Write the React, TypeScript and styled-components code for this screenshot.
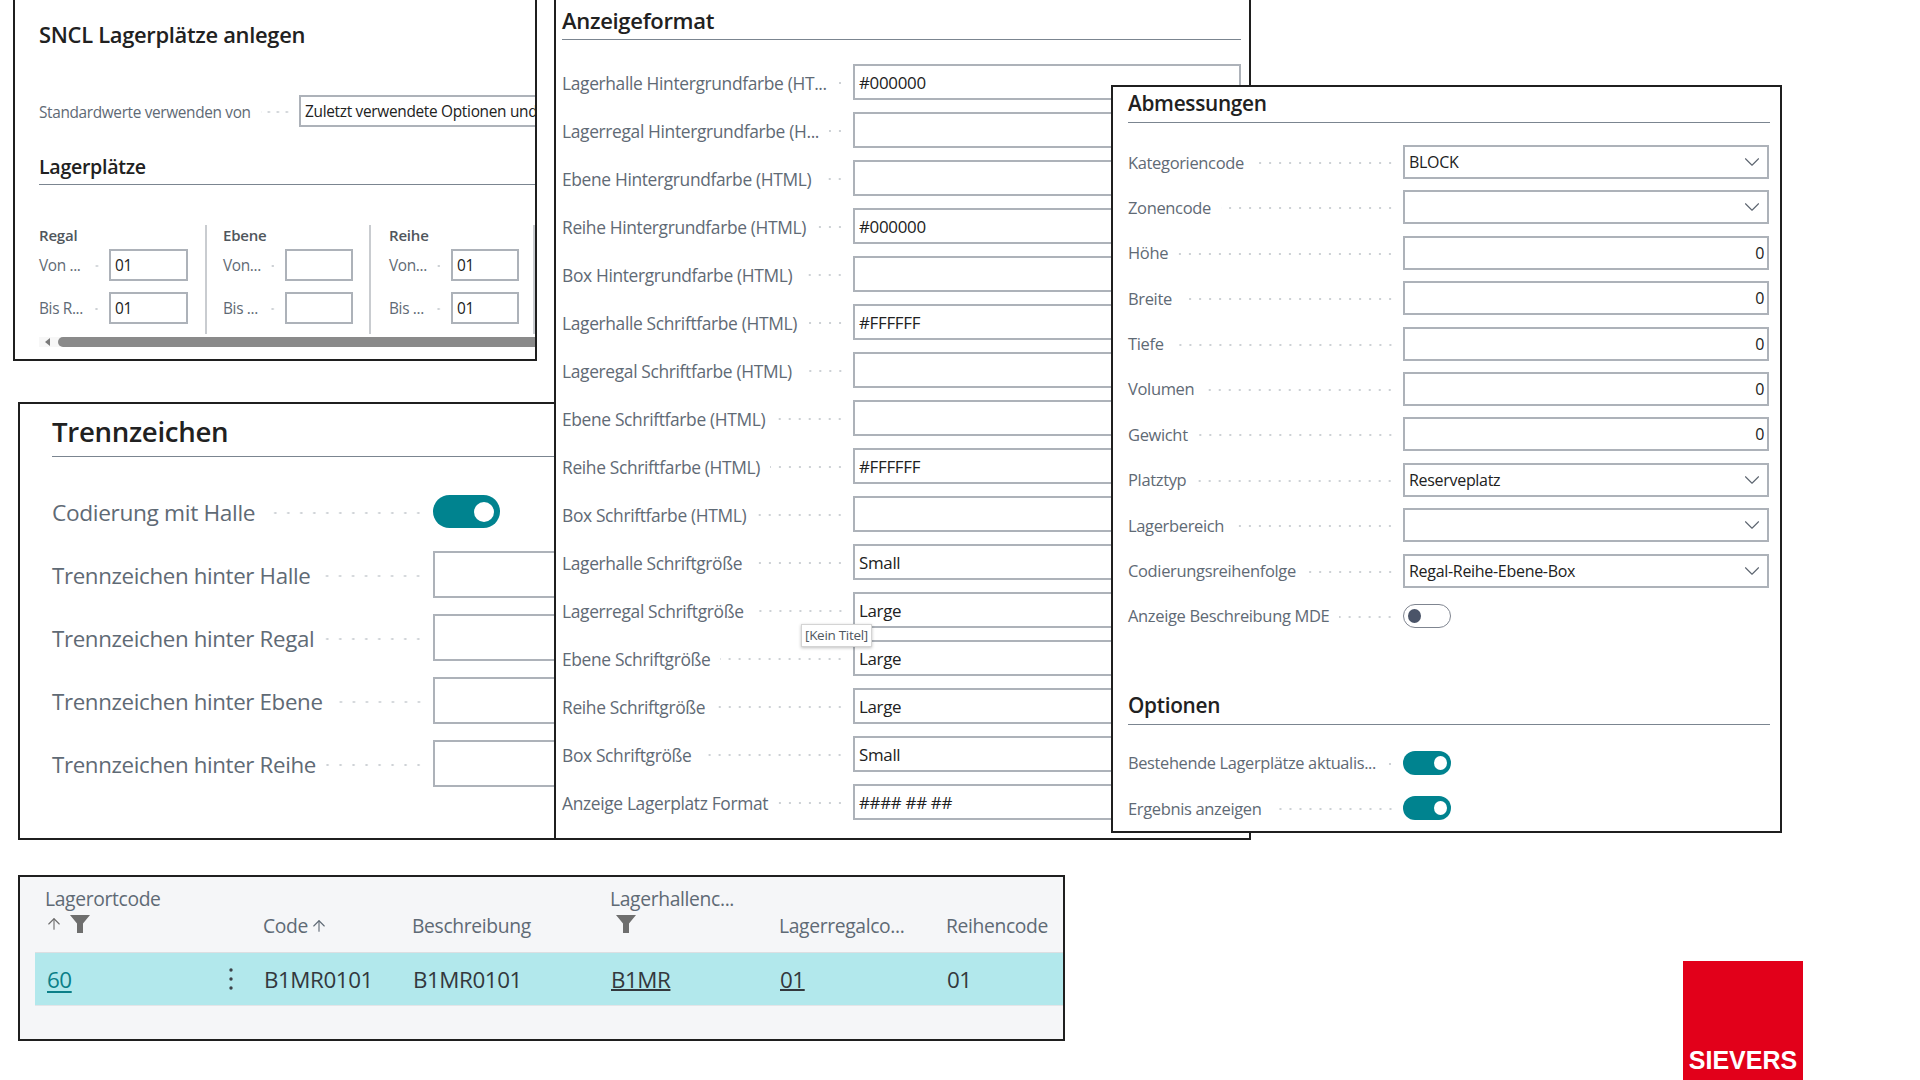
import React from 'react'
import styled, { createGlobalStyle } from 'styled-components'
import { ArrowUp, ChevronDown } from 'lucide-react'

const GlobalStyle = createGlobalStyle`
  html, body {
    margin: 0;
    padding: 0;
    background: #fff;
  }

  body {
    font-family: 'Open Sans', 'Noto Sans', sans-serif;
    color: #212121;
  }
`

const Canvas = styled.div`
  position: relative;
  width: 1920px;
  height: 1080px;
  overflow: hidden;
  background: #fff;
`

const Window = styled.section`
  position: absolute;
  box-sizing: border-box;
  overflow: hidden;
  display: flex;
  flex-direction: column;
  background: #fff;
  border: 2px solid #1f1f1f;
`

const SetupWindow = styled(Window)`
  left: 13px;
  top: -2px;
  width: 524px;
  height: 363px;
  padding-left: 24px;
`

const SeparatorWindow = styled(Window)`
  left: 18px;
  top: 402px;
  width: 545px;
  height: 438px;
  padding-left: 32px;
`

const FormatWindow = styled(Window)`
  left: 554px;
  top: -2px;
  width: 697px;
  height: 842px;
  padding: 0 8px 0 6px;
  overflow: visible;
`

const DimensionWindow = styled(Window)`
  left: 1111px;
  top: 85px;
  width: 671px;
  height: 748px;
  padding: 0 10px 0 15px;
`

const TableWindow = styled(Window)`
  left: 18px;
  top: 875px;
  width: 1047px;
  height: 166px;
  padding-left: 15px;
  background: #f5f6f8;
`

const PageTitle = styled.h1`
  margin: 0;
  height: 70px;
  font-size: 21.9px;
  font-weight: 600;
  line-height: 70px;
  letter-spacing: -0.3px;
  white-space: nowrap;
`

const Heading = styled.h2<{ $size: number; $height: number; $rise: number; $top?: number }>`
  flex: none;
  box-sizing: border-box;
  margin: ${(p) => p.$top ?? 0}px 0 0;
  height: ${(p) => p.$height}px;
  font-size: ${(p) => p.$size}px;
  font-weight: 600;
  line-height: ${(p) => 2 * (p.$height - p.$rise)}px;
  letter-spacing: -0.3px;
  white-space: nowrap;
  border-bottom: 1.5px solid #7b8590;
`

const Label = styled.span<{ $size: number }>`
  flex: none;
  font-size: ${(p) => p.$size}px;
  letter-spacing: -0.35px;
  color: #5f6a75;
  white-space: nowrap;
`

const Leader = styled.span<{ $step: number }>`
  flex: 1;
  min-width: 0;
  height: 4px;
  margin: 2px 8px 0 10px;
  background-image: radial-gradient(circle, #cdd1d5 1px, transparent 1.3px);
  background-size: ${(p) => p.$step}px 4px;
  background-position: right center;
`

const LabelCell = styled.div`
  display: flex;
  align-items: center;
  min-width: 0;
`

const ValueBox = styled.div<{ $size: number; $right?: boolean }>`
  position: relative;
  box-sizing: border-box;
  display: flex;
  align-items: center;
  justify-content: ${(p) => (p.$right ? 'flex-end' : 'flex-start')};
  height: 100%;
  padding: ${(p) => (p.$right ? '0 3px 0 0' : '0 0 0 4px')};
  overflow: hidden;
  background: #fff;
  border: 2px solid #adb2b9;
  font-size: ${(p) => p.$size}px;
  letter-spacing: -0.3px;
  color: #212121;
  white-space: nowrap;
`

const Chevron = styled(ChevronDown)`
  position: absolute;
  right: 2px;
  top: 50%;
  margin-top: -13px;
  color: #5d6570;
`

const Track = styled.span<{ $on: boolean; $large?: boolean }>`
  box-sizing: border-box;
  display: flex;
  align-items: center;
  justify-content: ${(p) => (p.$on ? 'flex-end' : 'flex-start')};
  width: ${(p) => (p.$large ? 67 : 48)}px;
  height: ${(p) => (p.$large ? 33 : 24)}px;
  padding: 0 ${(p) => (p.$large ? 6 : 4)}px;
  border-radius: 17px;
  background: ${(p) => (p.$on ? '#00838f' : '#fff')};
  border: ${(p) => (p.$on ? 'none' : '1.5px solid #7f8590')};
`

const Knob = styled.span<{ $on: boolean; $large?: boolean }>`
  width: ${(p) => (p.$large ? 20 : 13)}px;
  height: ${(p) => (p.$large ? 20 : 14)}px;
  border-radius: 50%;
  background: ${(p) => (p.$on ? '#fff' : '#4a5468')};
`

const DefaultsRow = styled.div`
  flex: none;
  display: grid;
  grid-template-columns: 260px 400px;
  height: 32px;
  margin-top: 25px;

  ${Label} {
    padding-top: 2px;
  }
`

const SetupRule = styled(Heading)`
  width: 640px;
`

const GroupRow = styled.div`
  flex: none;
  display: flex;
  margin-top: 40px;
`

const Group = styled.div<{ $width: number; $pad: number }>`
  flex: none;
  box-sizing: border-box;
  width: ${(p) => p.$width}px;
  height: 109px;
  padding-left: ${(p) => p.$pad}px;
  border-right: 2px solid #c9ccd0;
`

const GroupTitle = styled.div`
  height: 20px;
  margin-bottom: 4px;
  font-size: 15px;
  font-weight: 600;
  line-height: 20px;
  letter-spacing: -0.2px;
  color: #50565c;
`

const RangeRow = styled.div<{ $label: number; $input: number }>`
  display: grid;
  grid-template-columns: ${(p) => p.$label}px ${(p) => p.$input}px;
  height: 32px;
  margin-bottom: 11px;
`

const ScrollTrack = styled.div`
  flex: none;
  display: flex;
  align-items: center;
  gap: 8px;
  height: 10px;
  margin-top: 3px;
  background: #f7f7f7;
`

const ScrollArrow = styled.span`
  flex: none;
  margin-left: 6px;
  border-style: solid;
  border-width: 4px 5px 4px 0;
  border-color: transparent #7a7a7a transparent transparent;
`

const ScrollThumb = styled.span`
  flex: 1;
  height: 10px;
  border-radius: 5px 0 0 5px;
  background: #8a8a8a;
`

const SeparatorRows = styled.div`
  display: flex;
  flex-direction: column;
  gap: 16px;
  margin-top: 31px;
`

const SeparatorRow = styled.div`
  display: grid;
  grid-template-columns: 381px 220px;
  align-items: center;
  height: 47px;

  ${Label} {
    padding-top: 2px;
  }
`

const FormatRows = styled.div`
  display: flex;
  flex-direction: column;
  gap: 12px;
  margin-top: 24px;
`

const FormatRow = styled.div`
  display: grid;
  grid-template-columns: 291px 388px;
  height: 36px;

  ${Label} {
    padding-top: 2px;
  }
`

const KeinTitel = styled.div`
  position: absolute;
  left: 245px;
  top: 624px;
  z-index: 2;
  box-sizing: border-box;
  width: 71px;
  height: 23px;
  background: #fff;
  border: 1px solid #d4d4d4;
  box-shadow: 0 1px 3px rgba(0, 0, 0, 0.25);
  font-size: 13.5px;
  line-height: 21px;
  letter-spacing: -0.3px;
  text-align: center;
  color: #4f5760;
  white-space: nowrap;
`

const DimensionRows = styled.div<{ $top: number }>`
  display: flex;
  flex-direction: column;
  gap: 11.4px;
  margin-top: ${(p) => p.$top}px;
`

const DimensionRow = styled.div`
  display: grid;
  grid-template-columns: 275px 366px;
  align-items: center;
  height: 34px;
`

const TableGrid = styled.div`
  display: grid;
  grid-template-columns: 228px 149px 198px 169px 167px 1fr;
`

const HeaderCell = styled.div<{ $first?: boolean }>`
  display: flex;
  flex-direction: column;
  justify-content: flex-end;
  box-sizing: border-box;
  height: 75px;
  padding: 0 0 14px ${(p) => (p.$first ? 10 : 0)}px;
  font-size: 19.3px;
  line-height: 24px;
  letter-spacing: -0.35px;
  color: #5f6a75;
  white-space: nowrap;
`

const HeaderIcons = styled.div<{ $indent?: number }>`
  display: flex;
  align-items: center;
  gap: 7px;
  height: 24px;
  margin: 1px 0 2px ${(p) => p.$indent ?? 0}px;
  color: #6e6e6e;
`

const HeaderInline = styled.div`
  display: flex;
  align-items: center;
  gap: 2px;
`

const BodyRow = styled(TableGrid)`
  box-sizing: border-box;
  height: 54px;
  background: #b2e8ec;
  border-top: 1px solid #dcdfe2;
  border-bottom: 1px solid #e3e5e8;
`

const BodyCell = styled.div<{ $first?: boolean }>`
  display: flex;
  align-items: center;
  justify-content: ${(p) => (p.$first ? 'space-between' : 'flex-start')};
  padding: ${(p) => (p.$first ? '0 30px 0 12px' : '0 0 0 1px')};
  font-size: 22.4px;
  letter-spacing: -0.45px;
  color: #33383d;
`

const RowLink = styled.a`
  color: #0b7f88;
  text-decoration: underline;
  text-underline-offset: 3px;
`

const CodeLink = styled.span`
  text-decoration: underline;
  text-decoration-thickness: 2px;
  text-underline-offset: 1px;
`

const LogoMark = styled.div`
  position: absolute;
  left: 1683px;
  top: 961px;
  display: flex;
  align-items: flex-end;
  justify-content: center;
  box-sizing: border-box;
  width: 120px;
  height: 119px;
  padding-bottom: 6px;
  background: #e2001a;
  font-family: 'Liberation Sans', Arial, sans-serif;
  font-size: 25px;
  font-weight: 700;
  line-height: 28px;
  color: #fff;
`

const Funnel = () => (
  <svg width="20" height="18" viewBox="0 0 20 18" fill="currentColor">
    <path d="M0 0h20l-7 8.5V18H7V8.500z" />
  </svg>
)

const VerticalDots = () => (
  <svg width="4" height="24" viewBox="0 0 4 24" fill="#3c4248">
    <circle cx="2" cy="3" r="1.7" />
    <circle cx="2" cy="12" r="1.7" />
    <circle cx="2" cy="21" r="1.7" />
  </svg>
)

const Toggle = ({ on, large }: { on: boolean; large?: boolean }) => (
  <Track $on={on} $large={large}>
    <Knob $on={on} $large={large} />
  </Track>
)

const Caption = ({ text, size, step }: { text: string; size: number; step: number }) => (
  <LabelCell>
    <Label $size={size}>{text}</Label>
    <Leader $step={step} />
  </LabelCell>
)

const ranges = [
  {
    title: 'Regal',
    width: 168,
    pad: 0,
    label: 70,
    input: 79,
    from: 'Von ...',
    to: 'Bis R...',
    fromValue: '01',
    toValue: '01',
  },
  {
    title: 'Ebene',
    width: 164,
    pad: 16,
    label: 62,
    input: 68,
    from: 'Von...',
    to: 'Bis ...',
    fromValue: '',
    toValue: '',
  },
  {
    title: 'Reihe',
    width: 164,
    pad: 18,
    label: 62,
    input: 68,
    from: 'Von...',
    to: 'Bis ...',
    fromValue: '01',
    toValue: '01',
  },
]

const separators = [
  'Trennzeichen hinter Halle',
  'Trennzeichen hinter Regal',
  'Trennzeichen hinter Ebene',
  'Trennzeichen hinter Reihe',
]

const formats = [
  ['Lagerhalle Hintergrundfarbe (HT...', '#000000'],
  ['Lagerregal Hintergrundfarbe (H...', ''],
  ['Ebene Hintergrundfarbe (HTML)', ''],
  ['Reihe Hintergrundfarbe (HTML)', '#000000'],
  ['Box Hintergrundfarbe (HTML)', ''],
  ['Lagerhalle Schriftfarbe (HTML)', '#FFFFFF'],
  ['Lageregal Schriftfarbe (HTML)', ''],
  ['Ebene Schriftfarbe (HTML)', ''],
  ['Reihe Schriftfarbe (HTML)', '#FFFFFF'],
  ['Box Schriftfarbe (HTML)', ''],
  ['Lagerhalle Schriftgröße', 'Small'],
  ['Lagerregal Schriftgröße', 'Large'],
  ['Ebene Schriftgröße', 'Large'],
  ['Reihe Schriftgröße', 'Large'],
  ['Box Schriftgröße', 'Small'],
  ['Anzeige Lagerplatz Format', '#### ## ##'],
]

const dimensions = [
  { label: 'Kategoriencode', value: 'BLOCK', select: true },
  { label: 'Zonencode', value: '', select: true },
  { label: 'Höhe', value: '0' },
  { label: 'Breite', value: '0' },
  { label: 'Tiefe', value: '0' },
  { label: 'Volumen', value: '0' },
  { label: 'Gewicht', value: '0' },
  { label: 'Platztyp', value: 'Reserveplatz', select: true },
  { label: 'Lagerbereich', value: '', select: true },
  { label: 'Codierungsreihenfolge', value: 'Regal-Reihe-Ebene-Box', select: true },
]

const App = () => (
  <Canvas>
    <GlobalStyle />

    <SetupWindow>
      <PageTitle>SNCL Lagerplätze anlegen</PageTitle>
      <DefaultsRow>
        <Caption text="Standardwerte verwenden von" size={15.4} step={9} />
        <ValueBox $size={15.4}>Zuletzt verwendete Optionen und</ValueBox>
      </DefaultsRow>
      <SetupRule $size={19.6} $height={38} $rise={18} $top={20}>
        Lagerplätze
      </SetupRule>
      <GroupRow>
        {ranges.map((range) => (
          <Group key={range.title} $width={range.width} $pad={range.pad}>
            <GroupTitle>{range.title}</GroupTitle>
            <RangeRow $label={range.label} $input={range.input}>
              <Caption text={range.from} size={15.4} step={9} />
              <ValueBox $size={15.4}>{range.fromValue}</ValueBox>
            </RangeRow>
            <RangeRow $label={range.label} $input={range.input}>
              <Caption text={range.to} size={15.4} step={9} />
              <ValueBox $size={15.4}>{range.toValue}</ValueBox>
            </RangeRow>
          </Group>
        ))}
      </GroupRow>
      <ScrollTrack>
        <ScrollArrow />
        <ScrollThumb />
      </ScrollTrack>
    </SetupWindow>

    <SeparatorWindow>
      <Heading $size={27.6} $height={53} $rise={26}>
        Trennzeichen
      </Heading>
      <SeparatorRows>
        <SeparatorRow>
          <Caption text="Codierung mit Halle" size={22.7} step={13} />
          <Toggle on large />
        </SeparatorRow>
        {separators.map((text) => (
          <SeparatorRow key={text}>
            <Caption text={text} size={22.3} step={13} />
            <ValueBox $size={20} />
          </SeparatorRow>
        ))}
      </SeparatorRows>
    </SeparatorWindow>

    <FormatWindow>
      <Heading $size={22} $height={40} $rise={19.5}>
        Anzeigeformat
      </Heading>
      <FormatRows>
        {formats.map(([label, value]) => (
          <FormatRow key={label}>
            <Caption text={label} size={17.4} step={10} />
            <ValueBox $size={16.9}>{value}</ValueBox>
          </FormatRow>
        ))}
      </FormatRows>
      <KeinTitel>[Kein Titel]</KeinTitel>
    </FormatWindow>

    <DimensionWindow>
      <Heading $size={20.8} $height={36} $rise={19.5}>
        Abmessungen
      </Heading>
      <DimensionRows $top={22}>
        {dimensions.map(({ label, value, select }) => (
          <DimensionRow key={label}>
            <Caption text={label} size={16.5} step={10} />
            <ValueBox $size={16} $right={!select}>
              {value}
              {select && <Chevron size={26} strokeWidth={1} />}
            </ValueBox>
          </DimensionRow>
        ))}
        <DimensionRow>
          <Caption text="Anzeige Beschreibung MDE" size={16.5} step={10} />
          <Toggle on={false} />
        </DimensionRow>
      </DimensionRows>
      <Heading $size={20.8} $height={35} $rise={19.5} $top={57}>
        Optionen
      </Heading>
      <DimensionRows $top={21}>
        <DimensionRow>
          <Caption text="Bestehende Lagerplätze aktualis..." size={16.4} step={10} />
          <Toggle on />
        </DimensionRow>
        <DimensionRow>
          <Caption text="Ergebnis anzeigen" size={16.5} step={10} />
          <Toggle on />
        </DimensionRow>
      </DimensionRows>
    </DimensionWindow>

    <TableWindow>
      <TableGrid>
        <HeaderCell $first>
          Lagerortcode
          <HeaderIcons>
            <ArrowUp size={18} strokeWidth={1.5} />
            <Funnel />
          </HeaderIcons>
        </HeaderCell>
        <HeaderCell>
          <HeaderInline>
            Code
            <ArrowUp size={18} strokeWidth={1.5} />
          </HeaderInline>
        </HeaderCell>
        <HeaderCell>Beschreibung</HeaderCell>
        <HeaderCell>
          Lagerhallenc...
          <HeaderIcons $indent={6}>
            <Funnel />
          </HeaderIcons>
        </HeaderCell>
        <HeaderCell>Lagerregalco...</HeaderCell>
        <HeaderCell>Reihencode</HeaderCell>
      </TableGrid>
      <BodyRow>
        <BodyCell $first>
          <RowLink>60</RowLink>
          <VerticalDots />
        </BodyCell>
        <BodyCell>B1MR0101</BodyCell>
        <BodyCell>B1MR0101</BodyCell>
        <BodyCell>
          <CodeLink>B1MR</CodeLink>
        </BodyCell>
        <BodyCell>
          <CodeLink>01</CodeLink>
        </BodyCell>
        <BodyCell>01</BodyCell>
      </BodyRow>
    </TableWindow>

    <LogoMark>SIEVERS</LogoMark>
  </Canvas>
)

export default App
